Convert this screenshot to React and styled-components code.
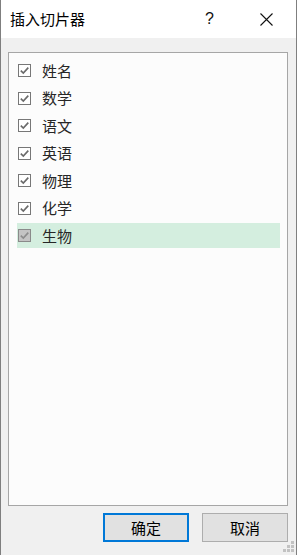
import React from 'react'
import styled, { createGlobalStyle } from 'styled-components'

const GlobalStyle = createGlobalStyle`
  html, body {
    margin: 0;
    padding: 0;
    background: #f0f0f0;
  }
  * {
    box-sizing: border-box;
  }
`

const FONT = `"Noto Sans CJK SC", "Liberation Sans", sans-serif`

const Window = styled.div`
  position: relative;
  width: 297px;
  height: 555px;
  display: flex;
  flex-direction: column;
  background: #f0f0f0;
  border-left: 1px solid #7f7f7f;
  border-right: 1px solid #7f7f7f;
  font-family: ${FONT};
  color: #000;
`

const TitleBar = styled.div`
  height: 38px;
  flex-shrink: 0;
  display: flex;
  align-items: center;
  background: #fff;
  padding-left: 9px;
`

const Title = styled.div`
  flex: 1;
  font-size: 15px;
  line-height: 20px;
  color: #000;
`

const TitleButton = styled.div`
  width: ${({ $w }) => $w}px;
  height: 38px;
  display: flex;
  align-items: center;
  justify-content: center;
  font-family: "Liberation Sans", sans-serif;
  font-size: 16px;
  color: #111;
`

const Body = styled.div`
  flex: 1;
  display: flex;
  flex-direction: column;
  padding: 14px 8px 0 7px;
`

const ListBox = styled.div`
  height: 454px;
  border: 1px solid #a6a6a6;
  background: #fcfcfc;
  padding: 5px 7px 0 8px;
  display: flex;
  flex-direction: column;
  gap: 2.5px;
`

const Row = styled.div`
  height: 25px;
  display: flex;
  align-items: center;
  gap: 11px;
  padding-left: 1px;
  background: ${({ $active }) => ($active ? '#d4eedf' : 'transparent')};
`

const Box = styled.span`
  width: 13px;
  height: 13px;
  flex-shrink: 0;
  border: 1px solid ${({ $dim }) => ($dim ? '#8a8a8a' : '#777')};
  background: ${({ $dim }) => ($dim ? '#c4c4c4' : '#fff')};
  display: flex;
  align-items: center;
  justify-content: center;
`

const Label = styled.span`
  font-size: 15px;
  line-height: 20px;
  color: #262626;
`

const ButtonRow = styled.div`
  margin-top: 7px;
  display: flex;
  justify-content: flex-end;
  gap: 13px;
`

const Button = styled.button`
  width: 86px;
  height: 29px;
  margin: 0;
  padding: 0;
  background: #e1e1e1;
  border: ${({ $primary }) => ($primary ? '2px solid #0078d7' : '1px solid #adadad')};
  font-family: ${FONT};
  font-size: 15px;
  line-height: 20px;
  color: #000;
`

const Grip = styled.svg`
  position: absolute;
  right: 1px;
  bottom: 2px;
`

const items = ['姓名', '数学', '语文', '英语', '物理', '化学', '生物']

function Check({ dim }) {
  return (
    <Box $dim={dim}>
      <svg width="11" height="11" viewBox="0 0 11 11">
        <polyline
          points="1.8,5.6 4.3,8.1 9.3,2.6"
          fill="none"
          stroke={dim ? '#8c8c8c' : '#6a6a6a'}
          strokeWidth="1.6"
        />
      </svg>
    </Box>
  )
}

export default function App() {
  return (
    <>
      <GlobalStyle />
      <Window>
        <TitleBar>
          <Title>插入切片器</Title>
          <TitleButton $w={63}>?</TitleButton>
          <TitleButton $w={50}>
            <svg width="13" height="13" viewBox="0 0 13 13">
              <path d="M0.5 0.5 L12.5 12.5 M12.5 0.5 L0.5 12.5" stroke="#111" strokeWidth="1.1" fill="none" />
            </svg>
          </TitleButton>
          <TitleButton $w={5} />
        </TitleBar>
        <Body>
          <ListBox>
            {items.map((name, i) => (
              <Row key={name} $active={i === items.length - 1}>
                <Check dim={i === items.length - 1} />
                <Label>{name}</Label>
              </Row>
            ))}
          </ListBox>
          <ButtonRow>
            <Button $primary>确定</Button>
            <Button>取消</Button>
          </ButtonRow>
        </Body>
        <Grip width="12" height="12" viewBox="0 0 12 12">
          <g fill="#c2c2c2">
            <rect x="8" y="0" width="3" height="3" />
            <rect x="4" y="4" width="3" height="3" />
            <rect x="8" y="4" width="3" height="3" />
            <rect x="0" y="8" width="3" height="3" />
            <rect x="4" y="8" width="3" height="3" />
            <rect x="8" y="8" width="3" height="3" />
          </g>
        </Grip>
      </Window>
    </>
  )
}
